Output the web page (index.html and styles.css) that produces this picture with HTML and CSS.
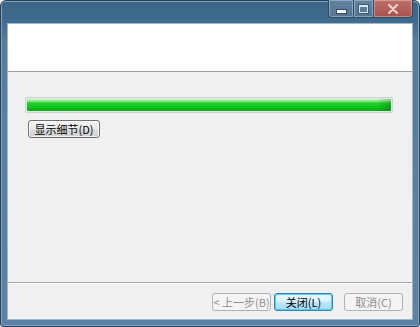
FILE: index.html
```html
<!DOCTYPE html>
<html>
<head>
<meta charset="utf-8">
<link rel="stylesheet" href="styles.css">
</head>
<body>
<div class="window">
  <div class="caption-buttons">
    <div class="cbtn cmin"><span class="min-glyph"></span></div>
    <div class="cbtn cmax"><span class="max-glyph"></span></div>
    <div class="cbtn cclose"><svg width="12" height="10" viewBox="0 0 12 10"><path d="M2 1 L10 9 M10 1 L2 9" stroke="#efd6d4" stroke-width="2" stroke-linecap="round"/></svg></div>
  </div>
  <div class="client">
    <div class="header"></div>
    <div class="content">
      <div class="progress"><div class="progress-fill"></div></div>
      <button class="btn details">显示细节(D)</button>
    </div>
    <div class="footer">
      <button class="btn disabled">&lt; 上一步(B)</button>
      <button class="btn default">关闭(L)</button>
      <button class="btn disabled cancel">取消(C)</button>
    </div>
  </div>
</div>
</body>
</html>
```
FILE: styles.css
```css
html, body {
  margin: 0;
  padding: 0;
  background: #ffffff;
}
.window {
  position: relative;
  box-sizing: border-box;
  width: 420px;
  height: 327px;
  padding: 23px 7px 7px 7px;
  border: 1px solid #24415c;
  border-radius: 6px 6px 3px 3px;
  background: linear-gradient(to bottom, #3a6587 0px, #3f6c8e 20px, #557d9e 40px, #5b82a2 100%);
  box-shadow: inset 0 0 0 1px #86a4be;
}
.caption-buttons {
  position: absolute;
  top: -1px;
  right: 6px;
  display: flex;
  height: 18px;
}
.cbtn {
  box-sizing: border-box;
  height: 18px;
  display: flex;
  align-items: center;
  justify-content: center;
  border: 1px solid #2d4b66;
  border-top: none;
  box-shadow: inset 0 0 0 1px rgba(255,255,255,0.3);
}
.cmin {
  width: 26px;
  border-radius: 0 0 0 4px;
  background: linear-gradient(to bottom, #62839f, #547692);
}
.cmax {
  width: 20px;
  border-left: none;
  background: linear-gradient(to bottom, #62839f, #547692);
}
.cclose {
  width: 39px;
  border-left: none;
  border-radius: 0 0 4px 0;
  background: linear-gradient(to bottom, #bf6f6b, #a9524e);
}
.min-glyph {
  width: 9px;
  height: 3px;
  margin-top: 5px;
  background: #f4f6f8;
  border: 1px solid #3a4d5e;
}
.max-glyph {
  width: 7px;
  height: 5px;
  border: 1px solid #dfe7ee;
  border-top-width: 2px;
  box-shadow: 0 0 0 1px #3d5870;
}
.client {
  display: flex;
  flex-direction: column;
  height: 100%;
  background: #f0f0f0;
  box-shadow: 0 0 0 1px #9fb7cc;
  font-family: "Noto Sans CJK SC", "Liberation Sans", sans-serif;
  font-size: 11px;
}
.header {
  height: 47px;
  background: #ffffff;
  border-bottom: 1px solid #a0a0a0;
  flex: none;
}
.content {
  flex: 1;
  padding: 25px 19px 0 17px;
  border-bottom: 1px solid #a8a8a8;
  box-shadow: 0 1px 0 #ffffff;
}
.progress {
  box-sizing: border-box;
  height: 16px;
  border: 1px solid #c9d6c9;
  border-radius: 2px;
  background: #e6e6e6;
  padding: 1px;
}
.progress-fill {
  height: 100%;
  border-radius: 1px;
  background:
    linear-gradient(to right, rgba(0,0,0,0) 96%, rgba(0,60,0,0.25) 100%),
    linear-gradient(to bottom, #c8f7c8 0%, #8be68d 18%, #21d22a 35%, #0ec51c 65%, #05ad14 100%);
}
.btn {
  box-sizing: border-box;
  font-family: "Noto Sans CJK SC", "Liberation Sans", sans-serif;
  font-size: 11px;
  line-height: 14px;
  color: #000000;
  padding: 0;
  border: 1px solid #707070;
  border-radius: 3px;
  background: linear-gradient(to bottom, #f2f2f2 0%, #ebebeb 50%, #dddddd 51%, #cfcfcf 100%);
  box-shadow: inset 0 0 0 1px rgba(255,255,255,0.7);
  height: 18px;
}
.details {
  display: block;
  width: 72px;
  margin: 7px 0 0 3px;
}
.footer {
  flex: none;
  box-sizing: border-box;
  height: 36px;
  display: flex;
  align-items: flex-start;
  padding: 10px 0 0 204px;
  gap: 3px;
}
.footer .btn {
  width: 59px;
}
.btn.disabled {
  color: #8d8d8d;
  border-color: #adb2b5;
  background: #f4f4f4;
  box-shadow: none;
}
.btn.default {
  border-color: #3c7fb1;
  background: linear-gradient(to bottom, #eaf6fd 0%, #d9f0fc 50%, #bee6fd 51%, #a7d9f5 100%);
  box-shadow: inset 0 0 0 1px #48d3f7;
}
.btn.cancel {
  margin-left: 8px;
}
```
